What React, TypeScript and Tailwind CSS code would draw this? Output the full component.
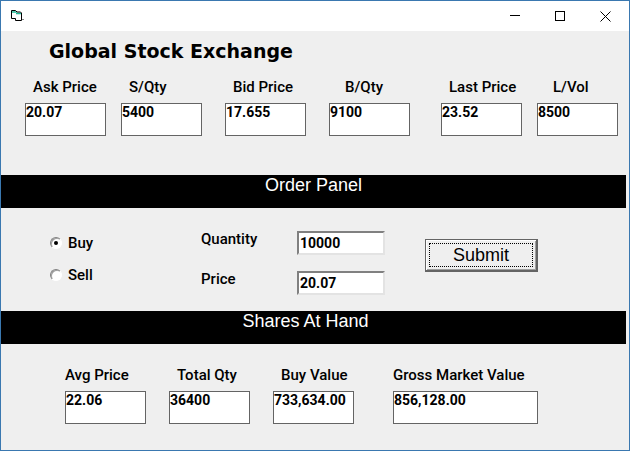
import React from 'react';

interface ReadoutProps {
    id: string;
    label: string;
    value: string;
    className?: string;
    labelClassName?: string;
}

const Readout: React.FC<ReadoutProps> = ({ id, label, value, className = '', labelClassName = 'pl-2' }) => (
    <div className={`min-w-0 ${className}`}>
        <label htmlFor={id} className={`block whitespace-nowrap font-[Roboto,sans-serif] text-[15px] leading-4 font-medium ${labelClassName}`}>
            {label}
        </label>
        <input
            id={id}
            readOnly
            defaultValue={value}
            className="mt-2 block h-[33px] w-full border border-[#646464] bg-white pb-[15px] font-[Roboto,sans-serif] text-[14px] font-bold outline-none"
        />
    </div>
);

const SectionBar: React.FC<{ title: string; className?: string }> = ({ title, className = '' }) => (
    <h2 className={`mr-[3px] h-[33px] bg-black text-center text-[18px] leading-5 text-white ${className}`}>{title}</h2>
);

const SideOption: React.FC<{ label: string; checked?: boolean }> = ({ label, checked = false }) => (
    <label className="flex h-4 items-center gap-[6px] font-[Roboto,sans-serif] text-[15px] leading-4 font-medium">
        <input
            type="radio"
            name="side"
            defaultChecked={checked}
            className="grid size-3 appearance-none place-items-center rounded-full border border-t-[#808080] border-r-white border-b-white border-l-[#808080] bg-white shadow-[inset_1px_1px_0_#a0a0a0] before:size-1 before:rounded-full checked:before:bg-black"
        />
        {label}
    </label>
);

const OrderField: React.FC<{ id: string; label: string; value: string }> = ({ id, label, value }) => (
    <div className="flex h-6">
        <label htmlFor={id} className="w-24 font-[Roboto,sans-serif] text-[15px] leading-4 font-medium">
            {label}
        </label>
        <input
            id={id}
            defaultValue={value}
            className="h-6 w-[88px] border-2 border-t-[#808080] border-r-[#e3e3e3] border-b-[#e3e3e3] border-l-[#808080] bg-white pl-px font-[Roboto,sans-serif] text-[14px] font-bold outline-none"
        />
    </div>
);

const TitleBar: React.FC = () => (
    <header className="flex h-[30px] items-center bg-white pl-[10px]">
        <svg width="14" height="12" viewBox="0 0 14 12" fill="none">
            <path d="M.5 .5h4l1.500 1.500h3l1.500 1v7.500h-6v-2h-4z" fill="#fff" />
            <path d="M1 2h4.500M5 3.500h5" stroke="#1fb894" strokeWidth="1.500" />
            <path d="M.5 8.500V.5h4L6 2h3.500l1 1v7.500h-6v-2h-4" stroke="#000" />
            <path d="M11 9.500h2" stroke="#888" />
        </svg>
        <div className="ml-auto flex">
            <button aria-label="Minimize" className="grid h-[29px] w-[45px] place-items-center">
                <svg width="11" height="11" viewBox="0 0 11 11" stroke="#000" shapeRendering="crispEdges">
                    <path d="M.5 4.500h10" />
                </svg>
            </button>
            <button aria-label="Maximize" className="grid h-[29px] w-[45px] place-items-center">
                <svg width="10" height="10" viewBox="0 0 10 10" fill="none" stroke="#000" shapeRendering="crispEdges">
                    <path d="M.5 .5h9v9h-9z" />
                </svg>
            </button>
            <button aria-label="Close" className="grid h-[29px] w-[47px] place-items-center">
                <svg width="11" height="11" viewBox="0 0 11 11" stroke="#000">
                    <path d="M.5 .5l10 10M10.500 .5l-10 10" />
                </svg>
            </button>
        </div>
    </header>
);

const App: React.FC = () => (
    <div className="min-h-screen border border-[#3a78b0] bg-[#efefef] font-['Liberation_Sans',Arial,sans-serif] text-black">
        <TitleBar />
        <main>
            <h1 className="pt-2 pl-12 font-['DejaVu_Sans',Verdana,sans-serif] text-[19px] leading-6 font-bold">Global Stock Exchange</h1>

            {/* Quotes */}
            <section className="flex pt-4 pr-[11px] pb-[39px] pl-6">
                <Readout id="ask" label="Ask Price" value="20.07" className="flex-1" />
                <Readout id="sqty" label="S/Qty" value="5400" className="ml-[15px] flex-1" />
                <Readout id="bid" label="Bid Price" value="17.655" className="ml-[23px] flex-1" />
                <Readout id="bqty" label="B/Qty" value="9100" className="ml-[23px] flex-1" labelClassName="pl-4" />
                <Readout id="last" label="Last Price" value="23.52" className="ml-[31px] flex-1" />
                <Readout id="lvol" label="L/Vol" value="8500" className="ml-[15px] flex-1" labelClassName="pl-4" />
            </section>

            <SectionBar title="Order Panel" />
            <form className="flex h-[103px] items-start pt-[23px] pl-[49px]" onSubmit={(e) => e.preventDefault()}>
                <fieldset className="flex w-[151px] flex-col gap-4 pt-1">
                    <SideOption label="Buy" checked />
                    <SideOption label="Sell" />
                </fieldset>
                <div className="flex flex-col gap-4">
                    <OrderField id="quantity" label="Quantity" value="10000" />
                    <OrderField id="price" label="Price" value="20.07" />
                </div>
                <button
                    type="submit"
                    className="mt-2 ml-10 h-[33px] w-[113px] border border-r-2 border-b-2 border-[#646464] p-[3px] text-[18px] shadow-[inset_1px_1px_0_#fff,inset_-1px_-1px_0_#a0a0a0]"
                >
                    <span className="flex h-full items-center justify-center border border-dotted border-black">Submit</span>
                </button>
            </form>

            <SectionBar title="Shares At Hand" className="pr-4" />
            <section className="flex pt-[23px] pr-[91px] pb-[26px] pl-16">
                <Readout id="avg" label="Avg Price" value="22.06" className="flex-[81]" labelClassName="" />
                <Readout id="total" label="Total Qty" value="36400" className="ml-[23px] flex-[81]" />
                <Readout id="buyValue" label="Buy Value" value="733,634.00" className="ml-[23px] flex-[81]" />
                <Readout id="gross" label="Gross Market Value" value="856,128.00" className="ml-[39px] flex-[145]" labelClassName="" />
            </section>
        </main>
    </div>
);

export default App;
